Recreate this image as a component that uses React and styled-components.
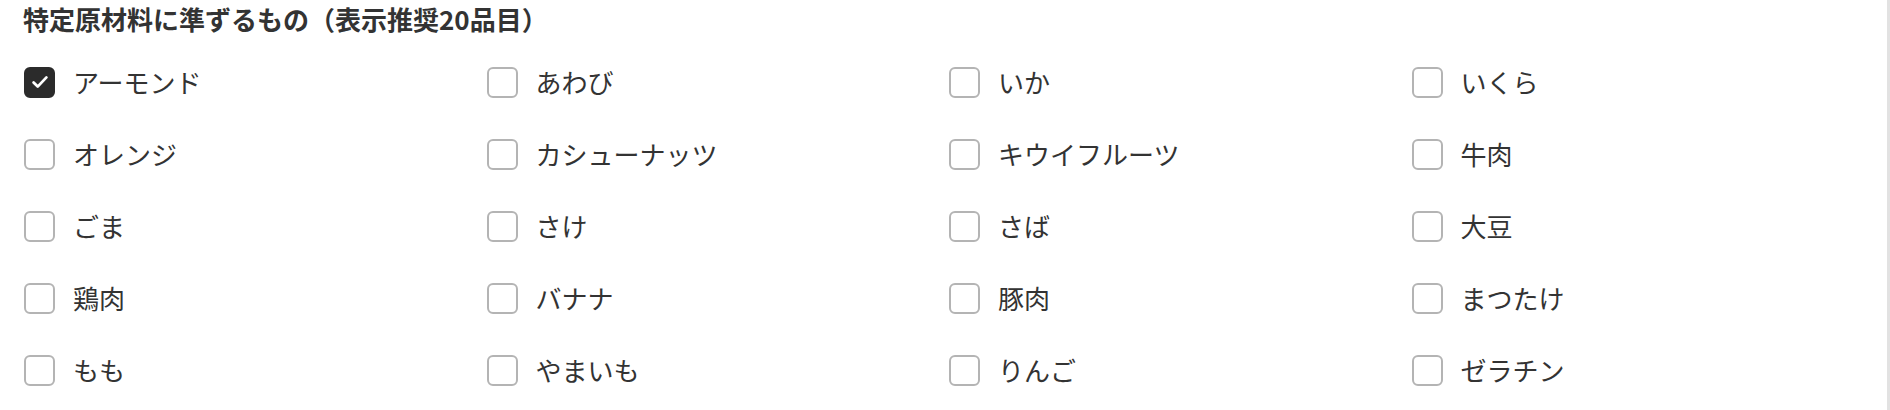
import React from 'react'
import styled, { createGlobalStyle } from 'styled-components'

const GlobalStyle = createGlobalStyle`
  html, body {
    margin: 0;
    padding: 0;
    background: #ffffff;
  }
  body {
    font-family: "Noto Sans CJK JP", "Noto Sans", sans-serif;
    color: #333333;
  }
`

const Panel = styled.section`
  box-sizing: border-box;
  width: 1890px;
  height: 410px;
  padding: 0 13px 0 24px;
  border-right: 3px solid #e2e2e2;
`

const Heading = styled.h2`
  margin: 0 0 8px -1px;
  height: 38px;
  line-height: 38px;
  font-size: 26px;
  font-weight: 700;
  color: #333333;
`

const Grid = styled.div`
  display: grid;
  grid-template-columns: repeat(4, 1fr);
  grid-auto-rows: 72px;
`

const Option = styled.label`
  display: flex;
  align-items: center;
  gap: 18px;
  cursor: pointer;
`

const Box = styled.span`
  box-sizing: border-box;
  width: 31px;
  height: 31px;
  flex: none;
  border-radius: 6px;
  border: 2px solid ${p => (p.$checked ? '#2b2b2b' : '#b4b4b4')};
  background: ${p => (p.$checked ? '#2b2b2b' : '#ffffff')};
  display: flex;
  align-items: center;
  justify-content: center;
`

const Label = styled.span`
  font-size: 26px;
  color: #333333;
  line-height: 1;
`

const items = [
  'アーモンド', 'あわび', 'いか', 'いくら',
  'オレンジ', 'カシューナッツ', 'キウイフルーツ', '牛肉',
  'ごま', 'さけ', 'さば', '大豆',
  '鶏肉', 'バナナ', '豚肉', 'まつたけ',
  'もも', 'やまいも', 'りんご', 'ゼラチン',
]

const Check = () => (
  <svg width="22" height="22" viewBox="0 0 24 24" fill="none">
    <path d="M5 12.5l4.5 4.5L19 7" stroke="#ffffff" strokeWidth="3" strokeLinecap="round" strokeLinejoin="round" />
  </svg>
)

const App = () => {
  const checked = ['アーモンド']
  return (
    <>
      <GlobalStyle />
      <Panel>
        <Heading>特定原材料に準ずるもの（表示推奨20品目）</Heading>
        <Grid>
          {items.map(name => {
            const on = checked.includes(name)
            return (
              <Option key={name}>
                <Box $checked={on}>{on && <Check />}</Box>
                <Label>{name}</Label>
              </Option>
            )
          })}
        </Grid>
      </Panel>
    </>
  )
}

export default App
